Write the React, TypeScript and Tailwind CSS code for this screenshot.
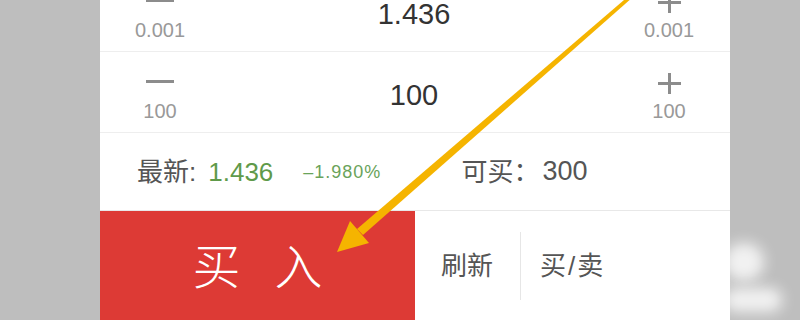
import React from "react";

const FONT = { fontFamily: '"Liberation Sans", "Noto Sans CJK SC", sans-serif' };

function Minus() {
  return (
    <svg width="28" height="3" viewBox="0 0 28 3" className="block">
      <rect x="0" y="0" width="28" height="3" fill="#8c8c8c" />
    </svg>
  );
}

function Plus() {
  return (
    <svg width="23" height="21" viewBox="0 0 23 21" className="block">
      <rect x="0" y="9" width="23" height="3" fill="#8c8c8c" />
      <rect x="10" y="0" width="3" height="21" fill="#8c8c8c" />
    </svg>
  );
}

function StepRow({ step, value }: { step: string; value: string }) {
  return (
    <div className="flex h-[81px] border-b border-[#eeeeee]">
      <div className="w-[120px] flex flex-col items-center pt-[28px]">
        <Minus />
        <div className="mt-[16px] text-[20px] leading-[24px] text-[#999999]">{step}</div>
      </div>
      <div className="flex-1 flex items-center justify-center pt-[5px] text-[29px] leading-[24px] text-[#333333]">
        {value}
      </div>
      <div className="w-[122px] flex flex-col items-center pt-[21px]">
        <Plus />
        <div className="mt-[5px] text-[20px] leading-[24px] text-[#999999]">{step}</div>
      </div>
    </div>
  );
}

export default function App() {
  return (
    <div className="relative w-[800px] h-[320px] overflow-hidden bg-[#bebebe] flex" style={FONT}>
      <div className="w-[100px] shrink-0" />
      <div className="w-[630px] shrink-0 bg-white flex flex-col">
        <div className="-mt-[29px] flex flex-col">
          <StepRow step="0.001" value="1.436" />
          <StepRow step="100" value="100" />
          <div className="flex items-center h-[78px] border-b border-[#e8e8e8] pl-[37px] text-[#555555]">
            <span className="text-[26px] leading-none">最新:</span>
            <span className="ml-[12px] text-[26px] leading-none text-[#5f9a4a]">1.436</span>
            <span className="ml-[30px] text-[18px] leading-none tracking-[1px] text-[#6aa35a]">–1.980%</span>
            <span className="ml-[80px] text-[26px] leading-none">可买：</span>
            <span className="ml-[3px] text-[27px] leading-none">300</span>
          </div>
          <div className="flex h-[110px]">
            <div className="w-[315px] bg-[#dd3a35] flex items-center justify-center pt-[4px] text-white font-light text-[48px] leading-none">
              <span>买</span>
              <span className="ml-[34px]">入</span>
            </div>
            <div className="flex-1 flex items-center text-[26px] text-[#555555]">
              <span className="ml-[26px]">刷新</span>
              <div className="ml-[27px] w-px h-[68px] bg-[#e6e6e6]" />
              <span className="ml-[19px]">买<span className="mx-[2px]">/</span>卖</span>
            </div>
          </div>
        </div>
      </div>

      {/* watermark blobs */}
      <div className="absolute left-[724px] top-[243px] w-[40px] h-[38px] rounded-full bg-white blur-[7px] opacity-80" />
      <div className="absolute left-[724px] top-[288px] w-[58px] h-[24px] rounded-full bg-white blur-[7px] opacity-80" />

      {/* yellow arrow */}
      <svg className="absolute left-0 top-0 pointer-events-none" width="800" height="320" viewBox="0 0 800 320">
        <polygon points="633,-3 631,-6 357,229 363,235" fill="#f5b400" />
        <polygon points="337,252 350,221 369,243" fill="#f5b400" />
      </svg>
    </div>
  );
}
